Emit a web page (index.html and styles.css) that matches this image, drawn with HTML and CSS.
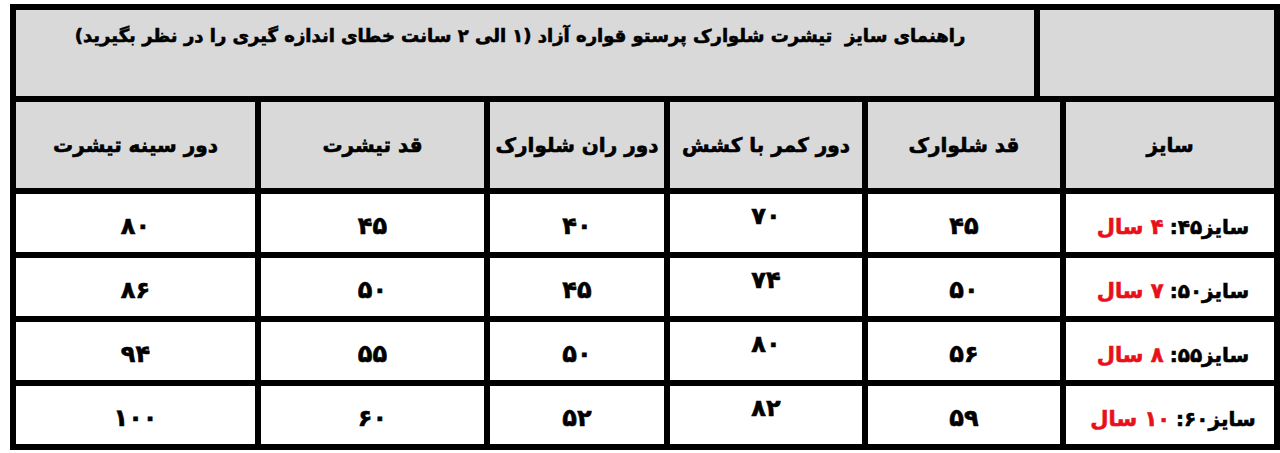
FILE: index.html
```html
<!DOCTYPE html>
<html lang="fa" dir="rtl">
<head>
<meta charset="utf-8">
<title>راهنمای سایز</title>
<link rel="stylesheet" href="styles.css">
</head>
<body>
<div class="sheet">
  <div class="row row-title">
    <div class="cell head"></div>
    <div class="cell head title">راهنمای سایز&nbsp; تیشرت شلوارک پرستو قواره آزاد (۱ الی ۲ سانت خطای اندازه گیری را در نظر بگیرید)</div>
  </div>
  <div class="row row-head">
    <div class="cell head">سایز</div>
    <div class="cell head">قد شلوارک</div>
    <div class="cell head">دور کمر با کشش</div>
    <div class="cell head">دور ران شلوارک</div>
    <div class="cell head">قد تیشرت</div>
    <div class="cell head">دور سینه تیشرت</div>
  </div>
  <div class="row row-data">
    <div class="cell size"><span>سایز۴۵: </span><span class="red">۴ سال</span></div>
    <div class="cell num">۴۵</div>
    <div class="cell num up">۷۰</div>
    <div class="cell num">۴۰</div>
    <div class="cell num">۴۵</div>
    <div class="cell num">۸۰</div>
  </div>
  <div class="row row-data">
    <div class="cell size"><span>سایز۵۰: </span><span class="red">۷ سال</span></div>
    <div class="cell num">۵۰</div>
    <div class="cell num up">۷۴</div>
    <div class="cell num">۴۵</div>
    <div class="cell num">۵۰</div>
    <div class="cell num">۸۶</div>
  </div>
  <div class="row row-data">
    <div class="cell size"><span>سایز۵۵: </span><span class="red">۸ سال</span></div>
    <div class="cell num">۵۶</div>
    <div class="cell num up">۸۰</div>
    <div class="cell num">۵۰</div>
    <div class="cell num">۵۵</div>
    <div class="cell num">۹۴</div>
  </div>
  <div class="row row-data">
    <div class="cell size"><span>سایز۶۰: </span><span class="red">۱۰ سال</span></div>
    <div class="cell num">۵۹</div>
    <div class="cell num up">۸۲</div>
    <div class="cell num">۵۲</div>
    <div class="cell num">۶۰</div>
    <div class="cell num">۱۰۰</div>
  </div>
</div>
</body>
</html>
```
FILE: styles.css
```css
html, body {
  margin: 0;
  padding: 0;
  background: #ffffff;
}
body {
  font-family: "DejaVu Sans", sans-serif;
  font-weight: bold;
  color: #000;
  -webkit-text-stroke: 0.6px currentColor;
}
.sheet {
  margin: 4px 0 0 3px;
  width: 1258px;
  padding: 6px;
  background: #000;
  display: flex;
  flex-direction: column;
  gap: 6px;
}
.row {
  display: grid;
  gap: 6px;
}
.row-title {
  grid-template-columns: 234px 1018px;
  height: 86px;
}
.row-head {
  grid-template-columns: 208px 192px 192px 174px 223px 239px;
  height: 86px;
}
.row-data {
  grid-template-columns: 208px 192px 192px 174px 223px 239px;
  height: 58px;
}
.cell {
  background: #fff;
  display: flex;
  align-items: center;
  justify-content: center;
  font-size: 20px;
}
.cell.head {
  background: #d9d9d9;
}
.title {
  align-items: flex-start;
  padding-top: 15px;
  padding-right: 10px;
  font-size: 18px;
  white-space: nowrap;
}
.num {
  font-size: 24px;
  padding-top: 6px;
}
.num.up {
  padding-top: 0;
  padding-bottom: 14px;
}
.size {
  font-size: 20px;
  padding-top: 8px;
  padding-left: 6px;
}
.red {
  color: #e8101a;
  margin-right: 6px;
  font-size: 21px;
}
```
